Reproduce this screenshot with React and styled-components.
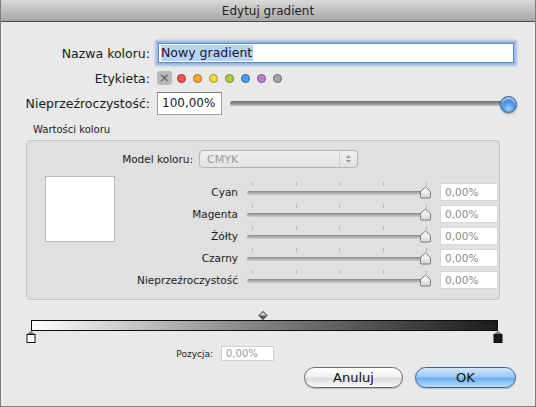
import React from 'react'
import styled, { createGlobalStyle } from 'styled-components'

const GlobalStyle = createGlobalStyle`
  html, body {
    margin: 0;
    padding: 0;
    background: #e8e8e8;
  }
  * {
    box-sizing: border-box;
  }
`

const LABEL_COLORS = [
  { fill: '#f0524d', stroke: '#a8302c' },
  { fill: '#f5a72e', stroke: '#b0701a' },
  { fill: '#e9de3a', stroke: '#9e951c' },
  { fill: '#a5d23e', stroke: '#6d8e22' },
  { fill: '#4d9cec', stroke: '#2c66a8' },
  { fill: '#b97ed3', stroke: '#7d4d94' },
  { fill: '#a4a4a4', stroke: '#6a6a6a' },
]

const CHANNELS = ['Cyan', 'Magenta', 'Żółty', 'Czarny', 'Nieprzeźroczystość']

const SliderKnob = () => (
  <svg width="13" height="13" viewBox="0 0 13 13">
    <defs>
      <linearGradient id="knobFill" x1="0" y1="0" x2="0" y2="1">
        <stop offset="0" stopColor="#ffffff" />
        <stop offset="1" stopColor="#d6d6d6" />
      </linearGradient>
    </defs>
    <path
      d="M1.5 6.5 Q1.5 5 3 4 L6.5 1 L10 4 Q11.5 5 11.5 6.5 V11 Q11.5 12 10.5 12 H2.5 Q1.5 12 1.5 11 Z"
      fill="url(#knobFill)"
      stroke="#6e6e6e"
      strokeWidth="0.9"
    />
  </svg>
)

const Diamond = () => (
  <svg width="10" height="9" viewBox="0 0 10 9">
    <path d="M5 0.5 L9 4.5 L5 8.5 L1 4.5 Z" fill="#d8d8d8" stroke="#222" strokeWidth="1" />
    <path d="M1 4.5 L9 4.5 L5 8.5 Z" fill="#555" />
  </svg>
)

const Stop = ({ color }) => (
  <svg width="10" height="12" viewBox="0 0 10 12">
    <path d="M5 0 L9 3 H1 Z" fill="#777" />
    <rect x="1" y="3.5" width="8" height="8" fill={color} stroke="#111" strokeWidth="1" />
  </svg>
)

export default function App() {
  return (
    <>
      <GlobalStyle />
      <Window>
        <TitleBar>Edytuj gradient</TitleBar>

        <Form>
          <Label>Nazwa koloru:</Label>
          <NameInput>
            <Selected>Nowy gradient</Selected>
          </NameInput>

          <Label>Etykieta:</Label>
          <Picker>
            <ClearBox>×</ClearBox>
            <Dots>
              {LABEL_COLORS.map((c) => (
                <Dot key={c.fill} $fill={c.fill} $stroke={c.stroke} />
              ))}
            </Dots>
          </Picker>

          <Label>Nieprzeźroczystość:</Label>
          <OpacityRow>
            <OpacityField>100,00%</OpacityField>
            <BigSlider>
              <BigTrack />
              <BlueKnob />
            </BigSlider>
          </OpacityRow>
        </Form>

        <GroupLabel>Wartości koloru</GroupLabel>
        <GroupBox>
          <ModelRow>
            <SmallLabel>Model koloru:</SmallLabel>
            <Popup>
              <span>CMYK</span>
              <PopupArrows>
                <svg width="7" height="10" viewBox="0 0 7 10">
                  <path d="M3.5 1 L6 4 H1 Z" fill="#9a9a9a" />
                  <path d="M3.5 9 L6 6 H1 Z" fill="#9a9a9a" />
                </svg>
              </PopupArrows>
            </Popup>
          </ModelRow>

          <Main>
            <Swatch />
            <Sliders>
              {CHANNELS.map((name) => (
                <React.Fragment key={name}>
                  <SmallLabel>{name}</SmallLabel>
                  <SmallSlider>
                    <Ticks>
                      {[0, 1, 2, 3, 4].map((i) => (
                        <Tick key={i} />
                      ))}
                    </Ticks>
                    <SmallTrack />
                    <KnobSpot>
                      <SliderKnob />
                    </KnobSpot>
                  </SmallSlider>
                  <ValueBox>0,00%</ValueBox>
                </React.Fragment>
              ))}
            </Sliders>
          </Main>
        </GroupBox>

        <GradientEditor>
          <DiamondRow>
            <Diamond />
          </DiamondRow>
          <GradientBar />
          <Stops>
            <Stop color="#ffffff" />
            <Stop color="#1a1a1a" />
          </Stops>
        </GradientEditor>

        <PositionRow>
          <TinyLabel>Pozycja:</TinyLabel>
          <PositionField>0,00%</PositionField>
        </PositionRow>

        <Buttons>
          <Button>Anuluj</Button>
          <Button $primary>OK</Button>
        </Buttons>
      </Window>
    </>
  )
}

const Window = styled.div`
  width: 536px;
  height: 407px;
  display: flex;
  flex-direction: column;
  background: #e9e9e9;
  border: 1px solid #7f7f7f;
  border-top: none;
  font-family: "DejaVu Sans", "Lucida Grande", sans-serif;
  color: #1a1a1a;
  overflow: hidden;
`

const TitleBar = styled.div`
  height: 22px;
  flex-shrink: 0;
  display: flex;
  align-items: center;
  justify-content: center;
  font-size: 12px;
  color: #222;
  background: linear-gradient(#dadada, #bdbdbd 55%, #a6a6a6);
  border-bottom: 1px solid #4e4e4e;
  margin: 0 -1px;
`

const Form = styled.div`
  display: grid;
  grid-template-columns: 149px 1fr;
  grid-template-rows: 22px 16px 23px;
  column-gap: 6px;
  row-gap: 6px;
  align-items: center;
  margin-top: 20px;
  padding-right: 19px;
`

const Label = styled.div`
  font-size: 12.5px;
  text-align: right;
  white-space: nowrap;
`

const NameInput = styled.div`
  height: 20px;
  margin: 0 2px;
  padding: 0 2px;
  display: flex;
  align-items: center;
  background: #fff;
  border: 1px solid #5f8cc8;
  box-shadow: 0 0 0 1px #8fb4e6, 0 0 2px 3px rgba(120, 160, 220, 0.6);
  font-size: 12.5px;
`

const Selected = styled.span`
  background: #b4d4fc;
  line-height: 16px;
  padding-right: 1px;
`

const Picker = styled.div`
  display: flex;
  align-items: center;
  gap: 5px;
  padding-left: 1px;
`

const ClearBox = styled.div`
  width: 15px;
  height: 14px;
  border-radius: 3px;
  background: #b9b9b9;
  color: #555;
  font-size: 13px;
  line-height: 14px;
  text-align: center;
`

const Dots = styled.div`
  display: flex;
  gap: 7px;
`

const Dot = styled.div`
  width: 9px;
  height: 9px;
  border-radius: 50%;
  background: ${(p) => p.$fill};
  border: 1px solid ${(p) => p.$stroke};
`

const OpacityRow = styled.div`
  display: flex;
  align-items: center;
  gap: 8px;
  padding-left: 1px;
`

const OpacityField = styled.div`
  width: 65px;
  height: 23px;
  flex-shrink: 0;
  background: #fff;
  border: 1px solid #9c9c9c;
  border-top-color: #7a7a7a;
  padding-left: 4px;
  font-size: 12px;
  line-height: 21px;
`

const BigSlider = styled.div`
  position: relative;
  flex: 1;
  height: 18px;
  display: flex;
  align-items: center;
`

const BigTrack = styled.div`
  width: 100%;
  height: 5px;
  border-radius: 3px;
  background: linear-gradient(#6a6a6a, #9d9d9d 60%, #c4c4c4);
`

const BlueKnob = styled.div`
  position: absolute;
  right: -1px;
  top: 1px;
  width: 17px;
  height: 17px;
  border-radius: 50%;
  border: 1px solid #2f5d9e;
  background: radial-gradient(circle at 50% 75%, #9fd1ff 0%, #4d94e8 45%, #1f5fc2 100%);
  box-shadow: inset 0 2px 2px rgba(255, 255, 255, 0.7), 0 1px 2px rgba(0, 0, 0, 0.35);
`

const GroupLabel = styled.div`
  margin: 9px 0 4px 32px;
  font-size: 10px;
  line-height: 12px;
  color: #222;
`

const GroupBox = styled.div`
  margin-left: 25px;
  width: 474px;
  height: 160px;
  flex-shrink: 0;
  padding-top: 9px;
  background: #e0e0e0;
  border: 1px solid #c5c5c5;
  border-radius: 4px;
`

const ModelRow = styled.div`
  display: grid;
  grid-template-columns: 166px 159px;
  column-gap: 6px;
  align-items: center;
  height: 18px;
`

const SmallLabel = styled.div`
  font-size: 10.5px;
  text-align: right;
  white-space: nowrap;
  color: #1a1a1a;
`

const Popup = styled.div`
  height: 18px;
  display: flex;
  align-items: center;
  justify-content: space-between;
  padding-left: 7px;
  border: 1px solid #b4b4b4;
  border-radius: 4px;
  background: linear-gradient(#f0f0f0, #e2e2e2);
  font-size: 11px;
  color: #9b9b9b;
`

const PopupArrows = styled.div`
  width: 18px;
  height: 100%;
  display: flex;
  align-items: center;
  justify-content: center;
  border-left: 1px solid #d0d0d0;
`

const Main = styled.div`
  display: flex;
  align-items: flex-start;
  margin-top: 8px;
`

const Swatch = styled.div`
  width: 70px;
  height: 66px;
  margin: 0 10px 0 18px;
  background: #fff;
  border: 1px solid #b9b9b9;
`

const Sliders = styled.div`
  margin-top: 5px;
  display: grid;
  grid-template-columns: 113px 184px 58px;
  grid-auto-rows: 22px;
  column-gap: 9px;
  align-items: center;
`

const SmallSlider = styled.div`
  position: relative;
  height: 22px;
  display: flex;
  flex-direction: column;
`

const Ticks = styled.div`
  display: flex;
  justify-content: space-between;
  height: 4px;
  margin-top: 1px;
  padding: 0 4px 0 5px;
`

const Tick = styled.div`
  width: 1px;
  height: 4px;
  background: #b8b8b8;
`

const SmallTrack = styled.div`
  height: 4px;
  margin-top: 5px;
  border-radius: 2px;
  background: linear-gradient(#888, #b4b4b4 60%, #cfcfcf);
`

const KnobSpot = styled.div`
  position: absolute;
  right: -1px;
  top: 5px;
  display: flex;
`

const ValueBox = styled.div`
  height: 18px;
  background: #fff;
  border: 1px solid #d6d6d6;
  padding-left: 4px;
  font-size: 10.5px;
  line-height: 16px;
  color: #8a8a8a;
`

const GradientEditor = styled.div`
  margin: 12px 0 0 30px;
  width: 467px;
  display: flex;
  flex-direction: column;
`

const DiamondRow = styled.div`
  height: 8px;
  display: flex;
  justify-content: center;
  align-items: flex-end;
  line-height: 0;
  margin-right: 3px;
`

const GradientBar = styled.div`
  height: 11px;
  border: 1px solid #0e0e0e;
  background: linear-gradient(to right, #ffffff, #8a8a8a 45%, #1b1b1b);
`

const Stops = styled.div`
  display: flex;
  justify-content: space-between;
  margin: 0 -5px;
  line-height: 0;
`

const PositionRow = styled.div`
  display: grid;
  grid-template-columns: 212px 53px;
  column-gap: 8px;
  align-items: center;
  height: 15px;
  margin-top: 3px;
`

const TinyLabel = styled.div`
  font-size: 9px;
  text-align: right;
`

const PositionField = styled.div`
  height: 15px;
  background: #fff;
  border: 1px solid #d0d0d0;
  padding-left: 4px;
  font-size: 10px;
  line-height: 13px;
  color: #9a9a9a;
`

const Buttons = styled.div`
  display: flex;
  justify-content: flex-end;
  gap: 12px;
  margin-top: 6px;
  padding-right: 19px;
`

const Button = styled.div`
  width: ${(p) => (p.$primary ? '101px' : '99px')};
  height: 21px;
  display: flex;
  align-items: center;
  justify-content: center;
  border-radius: 11px;
  font-size: 13px;
  color: #111;
  border: 1px solid ${(p) => (p.$primary ? '#3b5f93' : '#6a6a6a')};
  background: ${(p) =>
    p.$primary
      ? 'linear-gradient(#d3e8fb, #9cc9f5 45%, #6eb0f0 55%, #b4dcfd)'
      : 'linear-gradient(#ffffff, #f1f1f1 45%, #dcdcdc 55%, #fbfbfb)'};
  box-shadow: 0 1px 1px rgba(0, 0, 0, 0.2);
`
